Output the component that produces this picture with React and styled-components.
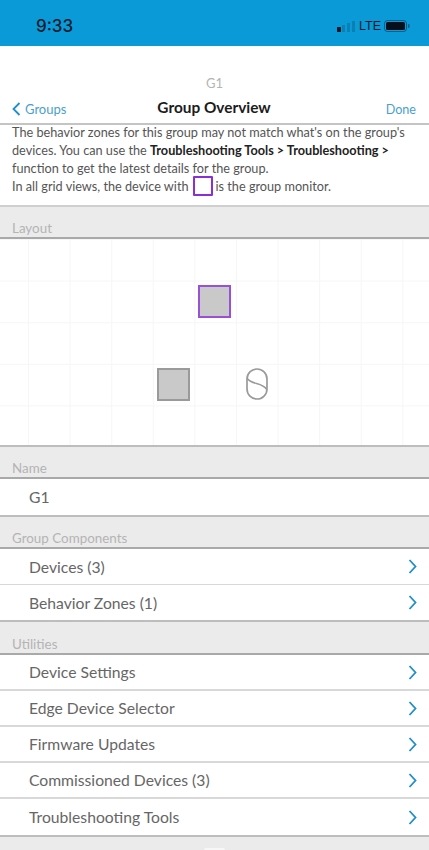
import React from 'react';
import styled, { createGlobalStyle } from 'styled-components';

const GlobalStyle = createGlobalStyle`
    html, body {
        margin: 0;
        padding: 0;
        background: #ebebeb;
    }
    * {
        box-sizing: border-box;
    }
`;

const font = `Lato, "Open Sans", "Liberation Sans", sans-serif`;

const Page = styled.div`
    width: 429px;
    height: 850px;
    overflow: hidden;
    display: flex;
    flex-direction: column;
    background: #ebebeb;
    font-family: ${font};
`;

const StatusBar = styled.div`
    height: 46px;
    flex: none;
    background: #0a9ad8;
    display: flex;
    align-items: center;
    justify-content: space-between;
    padding: 6px 19px 0 36px;
    color: #0c1a2a;
`;

const Clock = styled.span`
    font-family: Inter, "Liberation Sans", sans-serif;
    font-size: 17px;
    font-weight: 500;
`;

const StatusRight = styled.div`
    display: flex;
    align-items: center;
    gap: 3px;
`;

const Lte = styled.span`
    font-family: "Liberation Sans", sans-serif;
    font-size: 12.5px;
`;

const Nav = styled.header`
    height: 79px;
    flex: none;
    background: #fff;
    border-bottom: 2px solid #c4c4c4;
    display: flex;
    flex-direction: column;
    align-items: center;
`;

const NavSub = styled.div`
    margin-top: 29px;
    height: 16px;
    font-size: 13px;
    line-height: 16px;
    color: #b4b4b4;
`;

const NavRow = styled.div`
    width: 100%;
    display: flex;
    align-items: center;
    justify-content: space-between;
    padding: 0 13px 0 12px;
    height: 24px;
    margin-top: 4px;
`;

const BackLink = styled.span`
    display: flex;
    align-items: center;
    gap: 4px;
    width: 80px;
    margin-top: 4px;
    font-size: 13px;
    color: #4a9fce;
`;

const NavTitle = styled.span`
    font-size: 15.4px;
    font-weight: 700;
    color: #1c1c1c;
`;

const DoneLink = styled.span`
    width: 80px;
    margin-top: 4px;
    text-align: right;
    font-size: 12.6px;
    color: #4a9fce;
`;

const Notice = styled.div`
    height: 82px;
    flex: none;
    background: #fff;
    padding: 0 12px;
    border-bottom: 2px solid #cfcfcf;
`;

const NoticeText = styled.p`
    margin: -2px 0 0;
    font-size: 12.7px;
    line-height: 18px;
    color: #555;

    strong {
        color: #222;
        font-weight: 700;
    }
`;

const MonitorSwatch = styled.span`
    display: inline-block;
    width: 20px;
    height: 20px;
    margin: -2px 3px 0 4px;
    vertical-align: -5px;
    border: 2px solid #8a2fd6;
    border-radius: 1px;
`;

const SectionHeader = styled.div`
    height: ${(props) => props.h}px;
    flex: none;
    background: #ebebeb;
    border-bottom: 2px solid #a9a9a9;
    display: flex;
    align-items: flex-end;
    padding: 0 12px 1px;
    font-size: 13.4px;
    line-height: 16px;
    color: #b4b4b4;
`;

const LayoutGrid = styled.div`
    position: relative;
    height: 208px;
    flex: none;
    background-color: #fff;
    background-image: linear-gradient(to right, #f6f6f6 1px, transparent 1px),
        linear-gradient(to bottom, #f6f6f6 1px, transparent 1px);
    background-size: 41.6px 41.6px;
    background-position: 28px 0;
    border-bottom: 2px solid #bdbdbd;
`;

const DeviceSquare = styled.div`
    position: absolute;
    left: ${(props) => props.x}px;
    top: ${(props) => props.y}px;
    width: 33px;
    height: 33px;
    background: #c9c9c9;
    border: 2px solid ${(props) => (props.monitor ? '#9a4fd8' : '#9a9a9a')};
`;

const SensorIcon = styled.svg`
    position: absolute;
    left: 246px;
    top: 129px;
`;

const Row = styled.div`
    height: ${(props) => props.h}px;
    flex: none;
    background: #fff;
    display: flex;
    align-items: center;
    justify-content: space-between;
    padding: 0 12px 0 29px;
    font-size: 15.7px;
    color: #666;
    border-bottom: ${(props) => (props.last ? '2px solid #bdbdbd' : `${props.rule}px solid #d8d8d8`)};
`;

const FooterPeek = styled.div`
    flex: 1;
    display: flex;
    align-items: flex-end;
    justify-content: center;
`;

const PeekTab = styled.div`
    width: 21px;
    height: 2px;
    background: #f7f7f7;
    border-radius: 2px 2px 0 0;
`;

const Chevron = () => (
    <svg width="9" height="15" viewBox="0 0 9 15" fill="none">
        <path d="M1.5 1l6 6.5-6 6.5" stroke="#1f8fc8" strokeWidth="1.8" />
    </svg>
);

const components = ['Devices (3)', 'Behavior Zones (1)'];
const utilities = [
    'Device Settings',
    'Edge Device Selector',
    'Firmware Updates',
    'Commissioned Devices (3)',
    'Troubleshooting Tools',
];

const App = () => {
    return (
        <Page>
            <GlobalStyle />
            <StatusBar>
                <Clock>9:33</Clock>
                <StatusRight>
                    <svg width="19" height="11" viewBox="0 0 19 11">
                        <rect x="0" y="6" width="4" height="5" fill="#0c1a2a" />
                        <rect x="5" y="4" width="3" height="7" fill="#0c1a2a" opacity="0.2" />
                        <rect x="10" y="2" width="3" height="9" fill="#0c1a2a" opacity="0.2" />
                        <rect x="15" y="0" width="3" height="11" fill="#0c1a2a" opacity="0.2" />
                    </svg>
                    <Lte>LTE</Lte>
                    <svg width="26" height="12" viewBox="0 0 26 12">
                        <rect x="0.5" y="0.5" width="22" height="11" rx="3" fill="none" stroke="#0c1a2a" strokeOpacity="0.5" />
                        <rect x="2" y="2" width="19" height="8" rx="1.5" fill="#05101c" />
                        <rect x="24" y="4" width="1.5" height="4" rx="0.7" fill="#0c1a2a" opacity="0.5" />
                    </svg>
                </StatusRight>
            </StatusBar>
            <Nav>
                <NavSub>G1</NavSub>
                <NavRow>
                    <BackLink>
                        <svg width="9" height="14" viewBox="0 0 9 14" fill="none">
                            <path d="M7.5 1l-6 6 6 6" stroke="#1f8fc8" strokeWidth="1.8" />
                        </svg>
                        Groups
                    </BackLink>
                    <NavTitle>Group Overview</NavTitle>
                    <DoneLink>Done</DoneLink>
                </NavRow>
            </Nav>
            <Notice>
                <NoticeText>
                    The behavior zones for this group may not match what's on the group's devices. You can use the{' '}
                    <strong>Troubleshooting Tools &gt; Troubleshooting &gt;</strong> function to get the latest details
                    for the group.
                    <br />
                    In all grid views, the device with
                    <MonitorSwatch />
                    is the group monitor.
                </NoticeText>
            </Notice>
            <SectionHeader h={32}>Layout</SectionHeader>
            <LayoutGrid>
                <DeviceSquare monitor x={198} y={46} />
                <DeviceSquare x={157} y={129} />
                <SensorIcon width="22" height="32" viewBox="0 0 22 32" fill="none">
                    <rect x="1" y="1" width="20" height="30" rx="10" stroke="#9a9a9a" strokeWidth="1.7" />
                    <path d="M1.2 10.5C6 17 16 14 20.8 21.5" stroke="#9a9a9a" strokeWidth="1.5" />
                </SensorIcon>
            </LayoutGrid>
            <SectionHeader h={32}>Name</SectionHeader>
            <Row h={38} last>
                G1
            </Row>
            <SectionHeader h={32}>Group Components</SectionHeader>
            {components.map((label, i) => (
                <Row key={label} h={i === components.length - 1 ? 37 : 36} rule={1} last={i === components.length - 1}>
                    {label}
                    <Chevron />
                </Row>
            ))}
            <SectionHeader h={33}>Utilities</SectionHeader>
            {utilities.map((label, i) => (
                <Row key={label} h={i === utilities.length - 1 ? 38 : 36} rule={2} last={i === utilities.length - 1}>
                    {label}
                    <Chevron />
                </Row>
            ))}
            <FooterPeek>
                <PeekTab />
            </FooterPeek>
        </Page>
    );
};

export default App;
